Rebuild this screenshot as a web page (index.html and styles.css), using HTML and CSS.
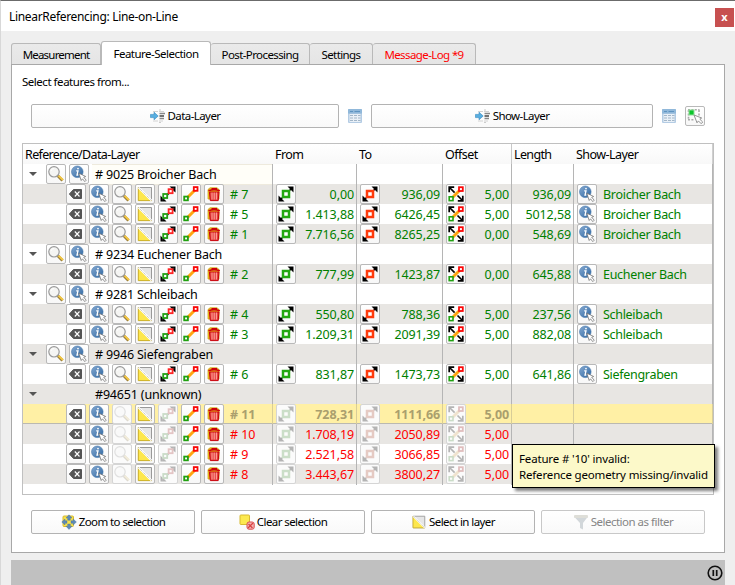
FILE: index.html
```
<!DOCTYPE html>
<html lang="en">
<head>
<meta charset="utf-8">
<title>LinearReferencing: Line-on-Line</title>
<link rel="stylesheet" href="styles.css">
</head>
<body>
<svg class="defs" aria-hidden="true">
  <linearGradient id="blue" x1="0" y1="0" x2="1" y2="1"><stop offset="0" stop-color="#87abd3"/><stop offset="1" stop-color="#2d659f"/></linearGradient>
  <symbol id="lens" viewBox="0 0 18 18"><path d="M10.8 10.8 15.5 15.5" stroke="#9a8040" stroke-width="3"/><path d="M11.5 10.6 16 15" stroke="#f5c842" stroke-width="1.8"/><circle cx="7" cy="6.8" r="5.2" fill="#f5f5f3" stroke="#999" stroke-width="1.2"/><path d="M4 6a3 3 0 0 1 3-2.5" stroke="#fff" fill="none"/></symbol>
  <symbol id="info" viewBox="0 0 18 18"><circle cx="7.3" cy="6.8" r="5.8" fill="url(#blue)" stroke="#4477ad" stroke-width=".6"/><path d="M6.2 5.8h1.8L7 10h1.3" fill="none" stroke="#fff" stroke-width="1.3"/><circle cx="8" cy="3.6" r=".9" fill="#fff"/><path d="M8.8 8.2 15.7 11.5 13.7 12.2 16.2 15.2 14.8 16.6 12.5 13.8 11.2 15.5Z" fill="#fff" stroke="#777" stroke-width=".8"/></symbol>
  <symbol id="del" viewBox="0 0 18 18"><path d="M2.4 9 6.5 4.5H14.5V13.5H6.5Z" fill="#555" stroke="#555" stroke-linejoin="round"/><path d="M7.8 6.5 12.5 11.5M12.5 6.5 7.8 11.5" stroke="#fff" stroke-width="1.1"/></symbol>
  <symbol id="sel" viewBox="0 0 18 18"><path d="M2.5 2.5H15.5V15.5H2.5Z" fill="#e6e6e6" stroke="#999"/><path d="M2.3 2.3 15.6 15.6H2.3Z" fill="#fde74c" stroke="#d2b528"/><path d="M2.5 2.5 15.5 15.5" stroke="#fff" stroke-width="1.8"/><path d="M2.5 2.5 15.5 15.5" stroke="#999" stroke-width=".7" stroke-dasharray="1 1"/></symbol>
  <symbol id="movepair" viewBox="0 0 18 18"><path d="M10.5 1.5H16.5V7.5L14.8 6 12.5 3.2ZM1.5 10.5V16.5H7.5L5.8 14.8 3.2 12.5Z" fill="#000"/><path d="M3 15 15 3" stroke="#222" stroke-width="1.8"/><rect x="4.2" y="9" width="4" height="4" fill="#fff" stroke="#22a015" stroke-width="1.8"/><rect x="9.6" y="4.2" width="4" height="4" fill="#fff" stroke="#f22" stroke-width="1.8"/></symbol>
  <symbol id="line" viewBox="0 0 18 18"><path d="M4 14 14 4" stroke="#ffa511" stroke-width="3"/><rect x="2.2" y="11.6" width="3.7" height="3.7" fill="#fff" stroke="#20a010" stroke-width="1.8"/><rect x="11.8" y="2.1" width="3.7" height="3.7" fill="#fff" stroke="#fa0808" stroke-width="1.8"/></symbol>
  <symbol id="trash" viewBox="0 0 18 18"><path d="M3 4.5 5 2.8H12L14 4.5V14H3Z" fill="#ebc51f" stroke="#cfa21b" stroke-width=".8"/><path d="M4.4 7H14L13.2 15.6H5.3Z" fill="#e54541" stroke="#c9000b"/><path d="M7 7.5V14.5M9.2 7.5V14.5M11.4 7.5V14.5" stroke="#ffb0a8" stroke-width=".9"/><path d="M3.5 5.8Q9 3.7 14.8 5.8M6.5 3.8H12" stroke="#cb000b" stroke-width="1.6" fill="none"/></symbol>
  <symbol id="mfrom" viewBox="0 0 18 18"><path d="M3 15 15 3" stroke="#000" stroke-width="1.5"/><path d="M10.5 1.5H16.5V7.5L14.5 5.4 12.5 3.5ZM1.5 10.5V16.5H7.5L5.5 14.5 3.5 12.5Z"/><rect x="6" y="6" width="6" height="6" fill="#fff" stroke="#25a811" stroke-width="2.5"/></symbol>
  <symbol id="mto" viewBox="0 0 18 18"><path d="M3 15 15 3" stroke="#000" stroke-width="1.5"/><path d="M10.5 1.5H16.5V7.5L14.5 5.4 12.5 3.5ZM1.5 10.5V16.5H7.5L5.5 14.5 3.5 12.5Z"/><rect x="6" y="6" width="6" height="6" fill="#fff" stroke="#ff3b0c" stroke-width="2.5"/></symbol>
  <symbol id="moff" viewBox="0 0 18 18"><path d="M4.5 13.5 13.5 4.5" stroke="#ffa511" stroke-width="3"/><path d="M3 3 7.6 7.6M10.5 10.5 15 15" stroke="#000" stroke-width="1.7"/><path d="M2.2 7.2V2.2H7.2M10.8 15.8H15.8V10.8" fill="none" stroke="#000" stroke-width="1.7"/><rect x="2.2" y="11.8" width="3.8" height="3.8" fill="#fff" stroke="#20a010" stroke-width="1.6"/><rect x="12" y="2.2" width="3.8" height="3.8" fill="#fff" stroke="#fa0808" stroke-width="1.8"/></symbol>
  <symbol id="load" viewBox="0 0 16 16"><path d="M3 3.5H8M3 13H8M9 3.5H14M9 13H13" stroke="#d2d2d2"/><path d="M9 2H11M9 14.5H11" stroke="#ccc"/><path d="M9.5 5.5H15M9.5 10.5H14" stroke="#888" stroke-width="1.4"/><path d="M9.5 8H14" stroke="#444" stroke-width="1.5"/><path d="M.5 6.4H4V4.2L8.2 8 4 11.8V9.6H.5Z" fill="#58aee0" stroke="#3288bf" stroke-width=".6"/></symbol>
  <symbol id="tbl" viewBox="0 0 14 14"><rect width="14" height="14" rx="1" fill="#b4cce4"/><path d="M0 1Q0 0 1 0H13Q14 0 14 1V4.5H0Z" fill="#90b8da"/><path d="M2 2.5H5M6.5 2.5H12" stroke="#5e93c0"/><path d="M1.5 5H12.5V13H1.5Z" fill="#e9f0f7"/><path d="M2 6.5H5M6 6.5H9M10 6.5H12.5M2 9H5M6 9H9M10 9H12.5M2 11.5H5M6 11.5H9M10 11.5H12.5" stroke="#a3b6c8"/></symbol>
  <symbol id="pick" viewBox="0 0 18 18"><path d="M2 2.8H13.5M2 12.8H8M2.5 3V13M13 3V9" stroke="#aaa" stroke-width="1.6" stroke-dasharray="2 1.4"/><rect x="3" y="3" width="5" height="5" fill="#0cc52b" stroke="#8fdf98"/><path d="M8 8 15.7 11 13.8 12.2 16.7 15 15.2 16.7 12.4 13.9 11 15.8Z" fill="#fff" stroke="#888" stroke-width=".9"/></symbol>
  <symbol id="zoomsel" viewBox="0 0 16 16"><rect x="2" y="2" width="10.5" height="10.5" rx="1" fill="#f7e14b" stroke="#d7ba30"/><path d="M8 .8 11 4H9.3V6.2H6.7V4H5ZM8 15.4 11 12.2H9.3V10H6.7V12.2H5ZM.8 8 4 5V6.8H6V9.3H4V11ZM15.4 8 12.2 5V6.8H10V9.3H12.2V11Z" fill="#5e8ab7" stroke="#45749f" stroke-width=".4"/></symbol>
  <symbol id="clear" viewBox="0 0 16 16"><rect x="1" y="1" width="9.5" height="9.5" rx=".8" fill="#fce94f" stroke="#d7ba30"/><rect x="8" y="8" width="7.2" height="7.2" rx="2" fill="#f4b6b6" stroke="#dc4e4e"/><path d="M9 14 14 9M9.5 10 13.5 14" stroke="#d84242" stroke-width="1.3"/></symbol>
  <symbol id="filter" viewBox="0 0 16 16"><path d="M1 2.5H15L10 9V15.5L7 14V9Z" fill="#d2d7da"/><rect x="1" y="1" width="14" height="3" rx="1" fill="#deded8"/></symbol>
</svg>

<div class="window">
  <header class="titlebar"><span class="title">LinearReferencing: Line-on-Line</span><button class="close">x</button></header>
  <nav class="tabs">
    <div class="tab t1">Measurement</div>
    <div class="tab t2 active">Feature-Selection</div>
    <div class="tab t3">Post-Processing</div>
    <div class="tab t4">Settings</div>
    <div class="tab t5 alert">Message-Log *9</div>
  </nav>
  <main class="panel">
    <div class="lead">Select features from...</div>
    <div class="sources">
      <button class="btn data"><svg><use href="#load"/></svg><span>Data-Layer</span></button>
      <svg class="tbl"><use href="#tbl"/></svg>
      <button class="btn show"><svg><use href="#load"/></svg><span>Show-Layer</span></button>
      <svg class="tbl"><use href="#tbl"/></svg>
      <button class="ib"><svg><use href="#pick"/></svg></button>
    </div>
    <section class="tree">
      <div class="row head"><div class="tight">Reference/Data-Layer</div><div>From</div><div>To</div><div class="sep">Offset</div><div class="tight">Length</div><div>Show-Layer</div></div>
      <div id="rows"></div>
    </section>
    <div class="actions">
      <button class="btn"><svg><use href="#zoomsel"/></svg><span>Zoom to selection</span></button>
      <button class="btn"><svg><use href="#clear"/></svg><span>Clear selection</span></button>
      <button class="btn"><svg><use href="#sel"/></svg><span>Select in layer</span></button>
      <button class="btn off"><svg><use href="#filter"/></svg><span>Selection as filter</span></button>
    </div>
  </main>
  <footer class="status"><svg viewBox="0 0 16 16"><circle cx="8" cy="8" r="6.8" fill="none" stroke="#111" stroke-width="1.6"/><path d="M6.3 5V11M9.7 5V11" stroke="#111" stroke-width="1.7"/></svg></footer>
  <div class="tooltip">Feature # '10' invalid:<br>Reference geometry missing/invalid</div>
</div>
<script src="rows.js"></script>
</body>
</html>
```
FILE: styles.css
```
* { box-sizing: border-box; }
body { margin: 0; background: #efefef; font: 12px "Noto Sans", "Open Sans", sans-serif; color: #000; overflow: hidden; }
button { font: inherit; color: inherit; padding: 0; margin: 0; }
svg { display: block; flex: none; }
.defs { position: absolute; width: 0; height: 0; }
.window { position: relative; width: 735px; height: 585px; border-top: 1px solid #6b6b6b; border-left: 1px solid #d8d8d8; display: flex; flex-direction: column; }
.titlebar { height: 30px; background: #fff; display: flex; justify-content: space-between; align-items: center; padding: 0 1px 0 8px; flex: none; }
.title { letter-spacing: -.32px; }
.close { width: 19px; height: 19px; margin-top: 3px; background: #c75050; border: 0; color: #fff; font: bold 11px/15px "Noto Sans", sans-serif; padding-bottom: 2px; }
.tabs { height: 33px; display: flex; align-items: flex-end; padding-left: 10px; flex: none; font-size: 11.5px; }
.tab { height: 21px; border: 1px solid #b9b9b9; border-bottom: 0; border-radius: 3px 3px 0 0; background: linear-gradient(#eaeaea, #e5e5e5); text-align: center; line-height: 22px; letter-spacing: -.6px; white-space: nowrap; }
.tab + .tab { border-left: 0; }
.t1 { width: 90px; }
.t2 { width: 110px; }
.t3 { width: 99px; }
.t4 { width: 63px; }
.t5 { width: 103px; }
.tab.t1 { letter-spacing: -.8px; }
.tab.active { height: 24px; margin-bottom: -1px; background: #fff; line-height: 24px; border-left: 1px solid #b9b9b9; z-index: 1; letter-spacing: -.52px; }
.alert { color: #f00; }
.panel { width: 714px; height: 489px; margin-left: 10px; border: 1px solid #a8a8a8; background: #fff; flex: none; }
.lead { height: 39px; padding: 9px 0 0 10px; font-size: 11.5px; line-height: 16px; letter-spacing: -.47px; }
.sources { display: flex; align-items: center; padding-left: 19px; height: 24px; }
.btn { height: 24px; border: 1px solid #b3b3b3; border-radius: 2px; background: linear-gradient(#fff, #f9f9f9); display: flex; align-items: center; justify-content: center; gap: 2px; font-size: 11.5px; letter-spacing: -.58px; white-space: nowrap; }
.btn svg { width: 16px; height: 16px; }
.btn span { margin-top: -1px; }
.data { width: 308px; }
.show { width: 282px; }
.tbl { width: 14px; height: 14px; margin: 0 9px; }
.ib { width: 20px; height: 20px; border: 1px solid #b9b9b9; border-radius: 2px; background: linear-gradient(#fff, #f7f7f7); flex: none; }
.ib svg { width: 18px; height: 18px; }
.tree { width: 692px; height: 352px; margin: 15px 0 0 10px; border: 1px solid #c0c0c0; }
.row { display: grid; grid-template-columns: 250px 84px 86px 69px 62px 1fr; height: 20px; font-size: 12.5px; line-height: 20px; white-space: nowrap; }
.head { background: linear-gradient(#fff, #f8f8f8); letter-spacing: -.55px; border-right: 1px solid #d0d0d0; }
.head > div { padding: 1px 0 0 2px; }
.head > .tight { letter-spacing: -.65px; }
.head .sep { border-right: 1px solid #c8c8c8; }
.data-row { background: #fff; }
.data-row:nth-child(even) { background: #e8e6e3; }
.cell { display: flex; border-right: 1px solid #b5b5b5; min-width: 0; }
.num { padding: 0 2px 0 3px; justify-content: space-between; }
.num span { margin-left: auto; padding-top: 1px; letter-spacing: -.1px; }
.layer { padding-left: 3px; }
.layer span { padding: 1px 0 0 6px; letter-spacing: -.3px; }
.tools { padding-left: 43px; gap: 3px; }
.tools span { padding: 1px 0 0 3px; letter-spacing: -.1px; }
.group { padding-left: 6px; gap: 3px; }
.group span { flex: 1; padding: 1px 0 0 3px; letter-spacing: -.18px; }
.group .blank { width: 43px; }
.arrow { width: 14px; height: 20px; flex: none; }
.group .current { background: #fffef8; border: solid #eeeadd; border-width: 1px 0; line-height: 18px; }
.ok { color: #008000; }
.bad { color: #f00; }
.data-row.hot { background: #fff0a5; color: #aa9f6d; font-weight: bold; border-bottom: 1px solid #bbb9b0; }
.hot .cell { border-color: #d8cd98; }
.hot .ib { margin-bottom: -1px; height: 20px; }
.ib.off { border-color: #d5d5d5; background: #fbfbfb; }
.ib.off svg { opacity: .28; filter: saturate(.5); }
.actions { display: flex; gap: 6px; padding: 15px 0 0 19px; }
.actions .btn { width: 164px; }
.btn.off { color: #858585; border-color: #c8c8c8; letter-spacing: -.5px; }
.status { width: 714px; height: 25px; margin: 7px 0 0 10px; background: #c0c0c0; display: flex; justify-content: flex-end; align-items: center; padding-right: 2px; flex: none; }
.status svg { width: 16px; height: 16px; }
.tooltip { position: absolute; left: 511px; top: 443px; width: 203px; height: 44px; border: 1px solid #000; background: #fcf9c9; box-shadow: 3px 3px 3px rgba(0,0,0,.5); padding: 6px; font-size: 11.5px; line-height: 16px; letter-spacing: -.16px; white-space: nowrap; }
```
FILE: rows.js
```
const groups = [
  ['# 9025 Broicher Bach', 'Broicher Bach', [['7', '0,00', '936,09', '5,00', '936,09'], ['5', '1.413,88', '6426,45', '5,00', '5012,58'], ['1', '7.716,56', '8265,25', '0,00', '548,69']]],
  ['# 9234 Euchener Bach', 'Euchener Bach', [['2', '777,99', '1423,87', '0,00', '645,88']]],
  ['# 9281 Schleibach', 'Schleibach', [['4', '550,80', '788,36', '5,00', '237,56'], ['3', '1.209,31', '2091,39', '5,00', '882,08']]],
  ['# 9946 Siefengraben', 'Siefengraben', [['6', '831,87', '1473,73', '5,00', '641,86']]],
  ['#94651 (unknown)', '', [['11', '728,31', '1111,66', '5,00', ''], ['10', '1.708,19', '2050,89', '5,00', ''], ['9', '2.521,58', '3066,85', '5,00', ''], ['8', '3.443,67', '3800,27', '5,00', '']]]
];
const icon = (id, off) => `<button class="ib${off ? ' off' : ''}"><svg><use href="#${id}"/></svg></button>`;
const arrow = '<svg class="arrow" viewBox="0 0 14 20"><path d="M0 8H8L4 12Z" fill="#555"/></svg>';
let html = '';
groups.forEach(([name, layer, items], index) => {
  const buttons = layer ? icon('lens') + icon('info') : '<i class="blank"></i>';
  html += `<div class="row data-row"><div class="cell group">${arrow}${buttons}<span class="${index ? '' : 'current'}">${name}</span></div>${'<div class="cell"></div>'.repeat(5)}</div>`;
  items.forEach(([id, from, to, offset, length]) => {
    const off = !layer;
    const tools = icon('del') + icon('info') + icon('lens', off) + icon('sel') + icon('movepair', off) + icon('line') + icon('trash');
    html += `<div class="row data-row ${off ? 'bad' : 'ok'}${id === '11' ? ' hot' : ''}">
      <div class="cell tools">${tools}<span># ${id}</span></div>
      <div class="cell num">${icon('mfrom', off)}<span>${from}</span></div>
      <div class="cell num">${icon('mto', off)}<span>${to}</span></div>
      <div class="cell num">${icon('moff', off)}<span>${offset}</span></div>
      <div class="cell num"><span>${length}</span></div>
      <div class="cell layer">${layer ? icon('info') : ''}<span>${layer}</span></div></div>`;
  });
});
document.getElementById('rows').innerHTML = html;
```
